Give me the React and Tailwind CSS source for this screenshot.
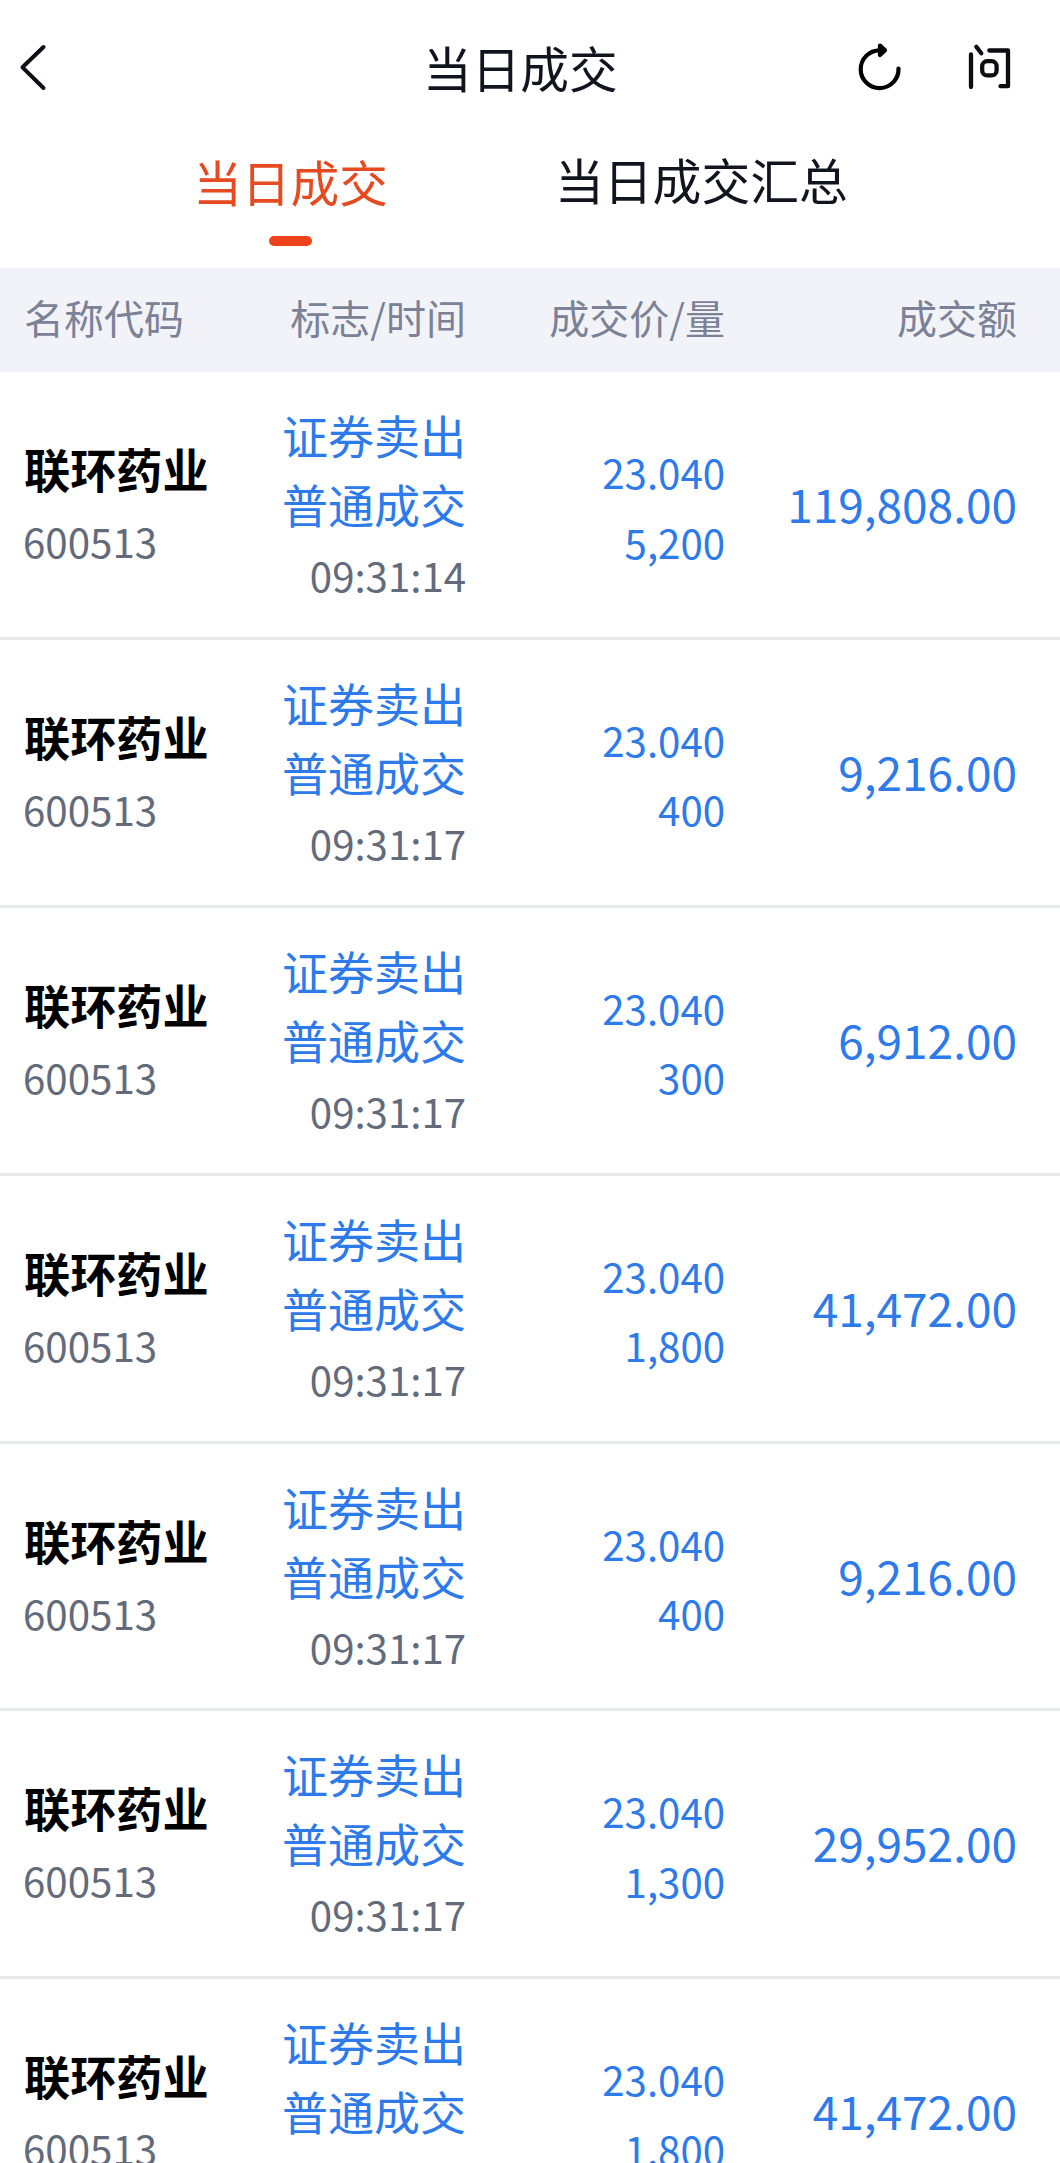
const rows = [
  ["09:31:14", "5,200", "119,808.00"],
  ["09:31:17", "400", "9,216.00"],
  ["09:31:17", "300", "6,912.00"],
  ["09:31:17", "1,800", "41,472.00"],
  ["09:31:17", "400", "9,216.00"],
  ["09:31:17", "1,300", "29,952.00"],
  ["09:31:17", "1,800", "41,472.00"],
];

function Row({ time, qty, amount }) {
  return (
    <div className="flex h-[267.9px] shrink-0 border-b-3 border-[#e6e8eb]">
      <div className="w-[240px] pl-6 pt-[60px]">
        <div className="whitespace-nowrap text-[46.2px] leading-[71px] font-bold text-black">联环药业</div>
        <div className="-ml-px text-[40.3px] leading-[75px] text-[#636a7a]">600513</div>
      </div>
      <div className="w-[226px] pt-[28px] text-right text-[#2d7aea]">
        <div className="text-[46px] leading-[69px]">证券卖出</div>
        <div className="text-[46px] leading-[69px]">普通成交</div>
        <div className="text-[40.2px] leading-[74px] text-[#636a7a]">{time}</div>
      </div>
      <div className="w-[259px] pt-[65px] text-right text-[40.2px] leading-[69.5px] text-[#2d7aea]">
        <div>23.040</div>
        <div>{qty}</div>
      </div>
      <div className="w-[292px] text-right text-[46px] leading-[263px] text-[#2d7aea]">{amount}</div>
    </div>
  );
}

export default function App() {
  return (
    <div className="flex h-[2163px] w-[1060px] flex-col overflow-hidden bg-white font-['Noto_Sans_CJK_SC',sans-serif]">
      <header className="flex h-[134px] shrink-0 items-center">
        <svg className="ml-4 h-[52px] w-[34px]" viewBox="16 41 34 52" fill="none" stroke="#0d1016" strokeWidth="4" strokeLinecap="round" strokeLinejoin="round">
          <path d="M43.5 47L22.5 67.3L43.5 88" />
        </svg>
        <h1 className="ml-[373px] w-[427px] text-[48.7px] leading-[134px] text-[#0f141f]">当日成交</h1>
        <svg className="h-[52px] w-[60px]" viewBox="850 41 60 52" fill="none" stroke="#000" strokeWidth="4.2" strokeLinecap="round" strokeLinejoin="round">
          <path d="M898.5 68.5A18.9 18.9 0 1 1 879.7 50.3H884" />
          <path d="M880 45.5L885 50.3L880 55Z" fill="#000" />
        </svg>
        <svg className="ml-[50px] h-[52px] w-[60px]" viewBox="960 41 60 52" fill="none" stroke="#0a0d12" strokeWidth="4.3" strokeLinecap="round" strokeLinejoin="round">
          <path d="M971 54.5V87M976.3 46.8L981.3 53.2M989.3 50.5H1008V86.2H1000.5" />
          <rect x="982.2" y="61.2" width="14.4" height="14.2" rx="5" />
        </svg>
      </header>
      <nav className="flex h-[134px] shrink-0">
        <div className="ml-[193px] flex w-[195px] flex-col items-center text-[48.7px] text-[#e54a21]">
          <span className="leading-[95px]">当日成交</span>
          <span className="mt-[7px] h-[10px] w-[43px] rounded-[5px] bg-[#ee421a]" />
        </div>
        <div className="ml-[167px] whitespace-nowrap text-[48.8px] leading-[89px] text-[#0f141f]">当日成交汇总</div>
      </nav>
      <div className="flex h-[104px] shrink-0 bg-[#f2f3f8] text-[40px] leading-[98px] text-[#7b8297]">
        <div className="w-[240px] pl-6">名称代码</div>
        <div className="w-[226px] text-right">标志/时间</div>
        <div className="w-[259px] text-right">成交价/量</div>
        <div className="w-[292px] text-right">成交额</div>
      </div>
      {rows.map(([t, q, a], i) => <Row key={i} time={t} qty={q} amount={a} />)}
    </div>
  );
}
